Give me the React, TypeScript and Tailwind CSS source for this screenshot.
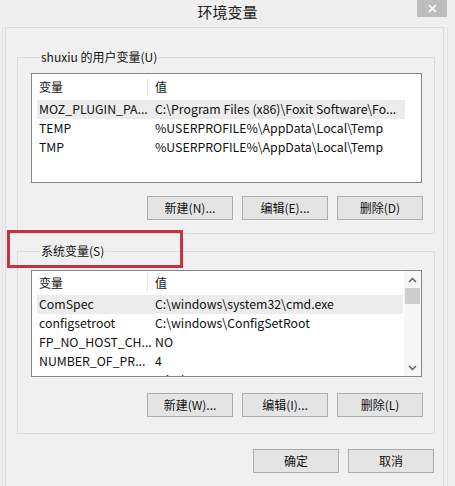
import React from "react";

const font = { fontFamily: "'Noto Sans CJK SC', 'Noto Sans', sans-serif" };

function Btn({ label }: { label: string }) {
  return (
    <div className="flex h-[24px] w-[86px] items-center justify-center border border-[#adadad] bg-[#e4e4e4] text-[12px] text-[#111]">
      {label}
    </div>
  );
}

type Row = [string, string, boolean?];

function ListView({
  rows,
  height,
  header,
  scroll,
}: {
  rows: Row[];
  height: number;
  header: number;
  scroll?: boolean;
}) {
  return (
    <div
      className="flex w-[391px] overflow-hidden border border-[#828790] bg-white"
      style={{ height }}
    >
      <div className="flex min-w-0 flex-1 flex-col">
        <div
          className="flex shrink-0 items-center text-[12px] text-[#111]"
          style={{ height: header }}
        >
          <div className="w-[116px] shrink-0 border-r border-[#e5e5e5] pl-[7px]">变量</div>
          <div className="pl-[7px]">值</div>
        </div>
        {rows.map(([a, b, sel], i) => (
          <div
            key={i}
            className={
              "ml-[5px] flex h-[19px] shrink-0 items-center whitespace-nowrap text-[12.3px] text-[#111] " +
              (scroll ? "mr-[1px] " : "mr-[16px] ") +
              (sel ? "bg-[#ececec]" : "")
            }
          >
            <div className="w-[111px] shrink-0 pl-[2px]">{a}</div>
            <div className="overflow-hidden pl-[7px]">{b}</div>
          </div>
        ))}
      </div>
      {scroll && (
        <div className="flex w-[17px] shrink-0 flex-col bg-[#f7f7f7]">
          <div className="flex h-[17px] items-center justify-center">
            <svg width="9" height="6" viewBox="0 0 9 6">
              <path d="M1 5 L4.5 1.5 L8 5" fill="none" stroke="#606060" strokeWidth="1.5" />
            </svg>
          </div>
          <div className="mx-[1px] h-[16px] bg-[#cdcdcd]" />
          <div className="flex-1" />
          <div className="flex h-[17px] items-center justify-center">
            <svg width="9" height="6" viewBox="0 0 9 6">
              <path d="M1 1 L4.5 4.5 L8 1" fill="none" stroke="#606060" strokeWidth="1.5" />
            </svg>
          </div>
        </div>
      )}
    </div>
  );
}

export default function App() {
  return (
    <div
      className="flex h-[486px] w-[455px] flex-col overflow-hidden bg-[#efefef]"
      style={font}
    >
      {/* title bar */}
      <div className="grid h-[27px] shrink-0 grid-cols-[1fr_auto_1fr] items-start">
        <div />
        <div className="pt-[2px] text-[15px] leading-[20px] text-[#222]">环境变量</div>
        <div className="flex justify-end pr-[8px]">
          <div className="flex h-[17px] w-[30px] items-center justify-center bg-[#bdbdbd]">
            <svg width="9" height="9" viewBox="0 0 9 9">
              <path d="M1 1 L8 8 M8 1 L1 8" stroke="#fff" strokeWidth="1.6" />
            </svg>
          </div>
        </div>
      </div>
      {/* client area */}
      <div className="ml-[2px] mr-[7px] flex flex-1 border-l border-r border-[#e2e2e2] pl-[2px] pr-[3px]">
        <div className="flex flex-1 flex-col border-l border-r border-t border-[#dadada] bg-[#f0f0f0] pl-[11px] pr-[8px] pt-[21px]">
          <fieldset className="border border-[#dcdcdc] pb-[13px] pl-[13px] pr-[11px] pt-[8px]">
            <legend className="ml-[9px] px-[1px] text-[12px] leading-[16px] text-[#111]">
              shuxiu 的用户变量(U)
            </legend>
            <ListView
              height={110}
              header={26}
              rows={[
                ["MOZ_PLUGIN_PA...", "C:\\Program Files (x86)\\Foxit Software\\Fo...", true],
                ["TEMP", "%USERPROFILE%\\AppData\\Local\\Temp"],
                ["TMP", "%USERPROFILE%\\AppData\\Local\\Temp"],
              ]}
            />
            <div className="mt-[13px] flex justify-end gap-[9px]">
              <Btn label="新建(N)..." />
              <Btn label="编辑(E)..." />
              <Btn label="删除(D)" />
            </div>
          </fieldset>
          <div className="relative mt-[9px]">
            <fieldset className="border border-[#dcdcdc] pb-[16px] pl-[13px] pr-[11px] pt-[11px]">
              <legend className="ml-[9px] px-[1px] text-[12px] leading-[16px] text-[#111]">
                系统变量(S)
              </legend>
              <ListView
                height={107}
                header={24}
                scroll
                rows={[
                  ["ComSpec", "C:\\windows\\system32\\cmd.exe", true],
                  ["configsetroot", "C:\\windows\\ConfigSetRoot"],
                  ["FP_NO_HOST_CH...", "NO"],
                  ["NUMBER_OF_PR...", "4"],
                  ["OS", "Windows_NT"],
                ]}
              />
              <div className="mt-[16px] flex justify-end gap-[9px]">
                <Btn label="新建(W)..." />
                <Btn label="编辑(I)..." />
                <Btn label="删除(L)" />
              </div>
            </fieldset>
            <div className="pointer-events-none absolute left-[-10px] top-[-13px] h-[38px] w-[176px] border-[3px] border-[#c8313f]" />
          </div>
          <div className="mt-[15px] flex justify-end gap-[9px] pr-[1px]">
            <Btn label="确定" />
            <Btn label="取消" />
          </div>
        </div>
      </div>
    </div>
  );
}
